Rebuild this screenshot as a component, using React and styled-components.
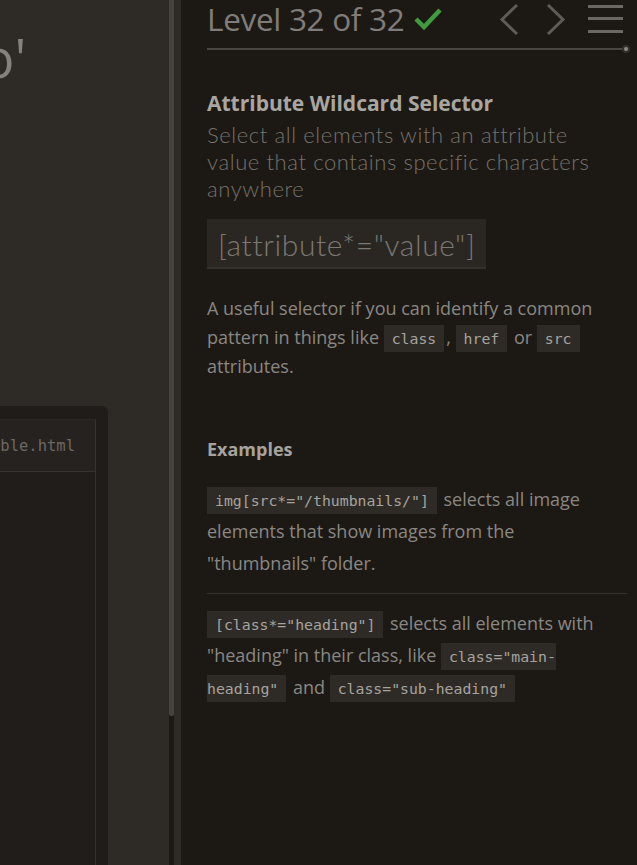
import React from 'react'
import styled, { createGlobalStyle } from 'styled-components'

const Global = createGlobalStyle`
  html, body {
    margin: 0;
    padding: 0;
    background: #1c1915;
  }
  body {
    font-family: "Open Sans", "DejaVu Sans", sans-serif;
  }
`

const Page = styled.div`
  display: flex;
  width: 637px;
  height: 865px;
  overflow: hidden;
`

const LeftPane = styled.div`
  display: flex;
  width: 181px;
  flex-shrink: 0;
  background: #2e2a25;
`

const LeftContent = styled.div`
  width: 169px;
  display: flex;
  flex-direction: column;
  overflow: hidden;
`

const BigCode = styled.div`
  margin-top: 22px;
  margin-left: -18px;
  font-size: 54px;
  line-height: 70px;
  color: #85817b;
  white-space: nowrap;
`

const EditorFrame = styled.div`
  margin-top: 314px;
  width: 108px;
  flex: 1;
  background: #1f1c19;
  border-top-right-radius: 6px;
  padding-top: 13px;
  display: flex;
`

const EditorPanel = styled.div`
  width: 95px;
  background: #201d1a;
  border-right: 1px solid #36322d;
  border-top: 1px solid #2b2824;
  display: flex;
  flex-direction: column;
`

const EditorTab = styled.div`
  height: 51px;
  border-bottom: 1px solid #36322d;
  display: flex;
  align-items: center;
  justify-content: flex-end;
  padding-right: 20px;
  font-family: "DejaVu Sans Mono", monospace;
  font-size: 15.5px;
  color: #6c6863;
  white-space: nowrap;
  background: #252220;
`

const Scrollbar = styled.div`
  width: 5px;
  display: flex;
  flex-direction: column;
  background: #1c1915;
`

const Thumb = styled.div`
  height: 716px;
  background: #46433e;
  border-radius: 0 0 2px 2px;
`

const Gutter = styled.div`
  width: 7px;
`

const RightPane = styled.div`
  flex: 1;
  padding: 0 10px 0 26px;
  display: flex;
  flex-direction: column;
  color: #8a8783;
`

const Header = styled.div`
  display: flex;
  align-items: center;
  height: 38px;
`

const LevelTitle = styled.h1`
  margin: 0;
  font-size: 31.5px;
  line-height: 38px;
  font-weight: 400;
  color: #7f7d7a;
  letter-spacing: -0.3px;
  display: flex;
  align-items: center;
  gap: 10px;
`

const Nav = styled.div`
  margin-left: auto;
  margin-right: 4px;
  display: flex;
  align-items: center;
`

const NavButton = styled.button`
  background: none;
  border: none;
  padding: 0;
  margin: 0 ${p => p.gap || 0}px 0 0;
  display: flex;
  cursor: pointer;
`

const Progress = styled.div`
  position: relative;
  margin-top: 10px;
  height: 2px;
  background: #4a4743;
`

const ProgressDot = styled.span`
  position: absolute;
  right: -3px;
  top: -3px;
  width: 4px;
  height: 4px;
  border-radius: 50%;
  background: #8d8a86;
  border: 2px solid #34312d;
`

const SelectorName = styled.h2`
  margin: 38px 0 0;
  font-size: 21px;
  font-weight: 700;
  color: #a9a6a1;
  line-height: 30px;
`

const Description = styled.p`
  margin: 3px 0 0;
  max-width: 400px;
  font-family: Lato, "Open Sans", sans-serif;
  font-weight: 300;
  font-size: 22px;
  letter-spacing: 0.6px;
  line-height: 27px;
  color: #75716b;
`

const Syntax = styled.div`
  align-self: flex-start;
  margin-top: 17px;
  padding: 0 11px;
  height: 48px;
  line-height: 50px;
  background: #2a2723;
  border-bottom: 2px solid #34312d;
  font-family: Lato, "Open Sans", sans-serif;
  font-weight: 300;
  font-size: 30px;
  letter-spacing: 0.6px;
  color: #7b7873;
`

const Hint = styled.p`
  margin: 25px 0 0;
  font-size: 18px;
  line-height: 29px;
  color: #8a8783;
`

const Code = styled.code`
  font-family: "DejaVu Sans Mono", monospace;
  font-size: 14.8px;
  line-height: 1;
  background: #2e2b27;
  color: #a6a39e;
  padding: 5px 8px;
  margin-right: 2px;
`

const ExamplesTitle = styled.h3`
  margin: 54px 0 0;
  font-size: 18px;
  font-weight: 700;
  color: #a6a39e;
  line-height: 28px;
`

const Example = styled.p`
  margin: ${p => p.top}px 0 0;
  padding-bottom: 14px;
  font-size: 18px;
  line-height: 32px;
  color: #8a8783;
  border-bottom: ${p => (p.divider ? '1px solid #34312c' : 'none')};
`

const LeftChevron = () => (
  <svg width="20" height="33" viewBox="0 0 20 33">
    <path d="M18 2 L3 16.5 L18 31" fill="none" stroke="#5f5c58" strokeWidth="3" />
  </svg>
)

const RightChevron = () => (
  <svg width="20" height="33" viewBox="0 0 20 33">
    <path d="M2 2 L17 16.5 L2 31" fill="none" stroke="#5f5c58" strokeWidth="3" />
  </svg>
)

const Burger = () => (
  <svg width="35" height="30" viewBox="0 0 35 30">
    <path d="M0 2.5 H35 M0 14.5 H35 M0 27.5 H35" stroke="#6b6864" strokeWidth="3" />
  </svg>
)

const Check = () => (
  <svg width="28" height="24" viewBox="0 0 28 24">
    <path d="M2 12 L10 20 L26 3" fill="none" stroke="#3f9b3d" strokeWidth="4.5" />
  </svg>
)

const App = () => {
  return (
    <Page>
      <Global />
      <LeftPane>
        <LeftContent>
          <BigCode>o'</BigCode>
          <EditorFrame>
            <EditorPanel>
              <EditorTab>ble.html</EditorTab>
            </EditorPanel>
          </EditorFrame>
        </LeftContent>
        <Scrollbar>
          <Thumb />
        </Scrollbar>
        <Gutter />
      </LeftPane>
      <RightPane>
        <Header>
          <LevelTitle>
            Level 32 of 32 <Check />
          </LevelTitle>
          <Nav>
            <NavButton gap={27}><LeftChevron /></NavButton>
            <NavButton gap={22}><RightChevron /></NavButton>
            <NavButton><Burger /></NavButton>
          </Nav>
        </Header>
        <Progress>
          <ProgressDot />
        </Progress>

        <SelectorName>Attribute Wildcard Selector</SelectorName>
        <Description>
          Select all elements with an attribute value that contains specific characters anywhere
        </Description>
        <Syntax>[attribute*="value"]</Syntax>

        <Hint>
          A useful selector if you can identify a common pattern in things like{' '}
          <Code>class</Code>, <Code>href</Code> or <Code>src</Code> attributes.
        </Hint>

        <ExamplesTitle>Examples</ExamplesTitle>
        <Example top={20} divider>
          <Code>img[src*="/thumbnails/"]</Code> selects all image elements that show images from the
          "thumbnails" folder.
        </Example>
        <Example top={13}>
          <Code>[class*="heading"]</Code> selects all elements with "heading" in their class, like{' '}
          <Code>class="main-heading"</Code> and <Code>class="sub-heading"</Code>
        </Example>
      </RightPane>
    </Page>
  )
}

export default App
